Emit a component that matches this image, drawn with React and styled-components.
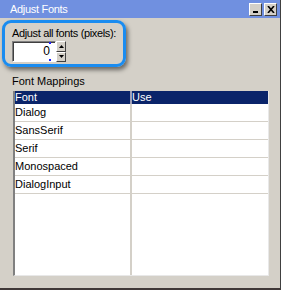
import styled, { createGlobalStyle } from 'styled-components';

const GlobalStyle = createGlobalStyle`
  body {
    margin: 0;
    background: #d4d0c8;
    font-family: "Liberation Sans", Arial, sans-serif;
    font-size: 11px;
  }
`;

const Window = styled.div`
  width: 280px;
  height: 288px;
  background: #d4d0c8;
  border-right: 1px solid #404040;
  border-bottom: 2px solid #403838;
  display: flex;
  flex-direction: column;
`;

const TitleBar = styled.div`
  height: 18px;
  background: #7090e0;
  display: flex;
  align-items: center;
  padding: 0 3px 0 10px;
  color: #fff;
  font-size: 11px;
  letter-spacing: -0.3px;
`;

const Title = styled.span`
  flex: 1;
`;

const TitleButton = styled.div`
  width: 13px;
  height: 13px;
  margin-left: 2px;
  background: #d4d0c8;
  border-top: 1px solid #fff;
  border-left: 1px solid #fff;
  border-right: 1px solid #404040;
  border-bottom: 1px solid #404040;
  display: flex;
  align-items: center;
  justify-content: center;
  box-sizing: border-box;
`;

const Body = styled.div`
  flex: 1;
  display: flex;
  flex-direction: column;
  padding: 2px 11px 12px 2px;
`;

const Highlight = styled.div`
  width: 124px;
  height: 47px;
  box-sizing: border-box;
  border: 3px solid #1a8cf0;
  border-radius: 9px;
  box-shadow: 2px 3px 4px rgba(0, 0, 0, 0.5);
  padding: 4px 0 0 7px;
`;

const Label = styled.div`
  color: #000;
  font-size: 11px;
  line-height: 13px;
  letter-spacing: -0.35px;
  white-space: nowrap;
`;

const Spinner = styled.div`
  display: flex;
  margin-top: 1px;
  height: 21px;
`;

const Field = styled.div`
  position: relative;
  width: 44px;
  box-sizing: border-box;
  background: #fff;
  border-top: 1px solid #808080;
  border-left: 1px solid #808080;
  border-right: 1px solid #fff;
  border-bottom: 1px solid #fff;
  box-shadow: inset 1px 1px 0 #404040;
  text-align: right;
  padding-right: 5px;
  font-size: 12px;
  line-height: 19px;
`;

const Caret = styled.span`
  position: absolute;
  right: 4px;
  width: 2px;
  height: 2px;
  background: #2020ff;
  top: ${(p) => (p.$bottom ? '17px' : '0')};
`;

const Arrows = styled.div`
  display: flex;
  flex-direction: column;
  width: 10px;
`;

const ArrowButton = styled.div`
  flex: 1;
  background: #d4d0c8;
  box-sizing: border-box;
  border-top: 1px solid #fff;
  border-left: 1px solid #fff;
  border-right: 1px solid #404040;
  border-bottom: 1px solid #404040;
  display: flex;
  align-items: center;
  justify-content: center;
`;

const Section = styled.div`
  margin: 8px 0 3px 10px;
  font-size: 11px;
  line-height: 13px;
`;

const Table = styled.div`
  margin-left: 11px;
  flex: 1;
  background: #fff;
  border-left: 2px solid #808080;
  border-right: 1px solid #e8e8e8;
  border-bottom: 1px solid #e8e8e8;
  display: flex;
  flex-direction: column;
`;

const Row = styled.div`
  display: grid;
  grid-template-columns: 117px 1fr;
  height: ${(p) => (p.$head ? '13px' : '18px')};
  background: ${(p) => (p.$head ? '#0a246a' : '#fff')};
  color: ${(p) => (p.$head ? '#fff' : '#000')};
  border-bottom: ${(p) => (p.$head ? 'none' : '1px solid #d4d0c8')};
  box-sizing: border-box;
`;

const Cell = styled.div`
  padding-left: 0;
  line-height: ${(p) => (p.$head ? '13px' : '17px')};
  border-right: 2px solid ${(p) => (p.$head ? '#a0a0b8' : '#d4d0c8')};
  &:last-child {
    border-right: none;
  }
`;

const Filler = styled.div`
  flex: 1;
  display: grid;
  grid-template-columns: 117px 1fr;
  & > div:first-child {
    border-right: 2px solid #d4d0c8;
  }
`;

const fonts = ['Dialog', 'SansSerif', 'Serif', 'Monospaced', 'DialogInput'];

export default function App() {
  return (
    <>
      <GlobalStyle />
      <Window>
        <TitleBar>
          <Title>Adjust Fonts</Title>
          <TitleButton>
            <svg width="7" height="7" viewBox="0 0 7 7">
              <rect x="1" y="5" width="5" height="2" fill="#000" />
            </svg>
          </TitleButton>
          <TitleButton>
            <svg width="8" height="7" viewBox="0 0 8 7">
              <path d="M1 0 L7 7 M7 0 L1 7" stroke="#000" strokeWidth="1.6" />
            </svg>
          </TitleButton>
        </TitleBar>
        <Body>
          <Highlight>
            <Label>Adjust all fonts (pixels):</Label>
            <Spinner>
              <Field>
                0
                <Caret />
                <Caret $bottom />
              </Field>
              <Arrows>
                <ArrowButton>
                  <svg width="5" height="3" viewBox="0 0 5 3">
                    <path d="M2.5 0 L5 3 L0 3 Z" fill="#000" />
                  </svg>
                </ArrowButton>
                <ArrowButton>
                  <svg width="5" height="3" viewBox="0 0 5 3">
                    <path d="M0 0 L5 0 L2.5 3 Z" fill="#000" />
                  </svg>
                </ArrowButton>
              </Arrows>
            </Spinner>
          </Highlight>
          <Section>Font Mappings</Section>
          <Table>
            <Row $head>
              <Cell $head>Font</Cell>
              <Cell $head>Use</Cell>
            </Row>
            {fonts.map((f) => (
              <Row key={f}>
                <Cell>{f}</Cell>
                <Cell />
              </Row>
            ))}
            <Filler>
              <div />
              <div />
            </Filler>
          </Table>
        </Body>
      </Window>
    </>
  );
}
